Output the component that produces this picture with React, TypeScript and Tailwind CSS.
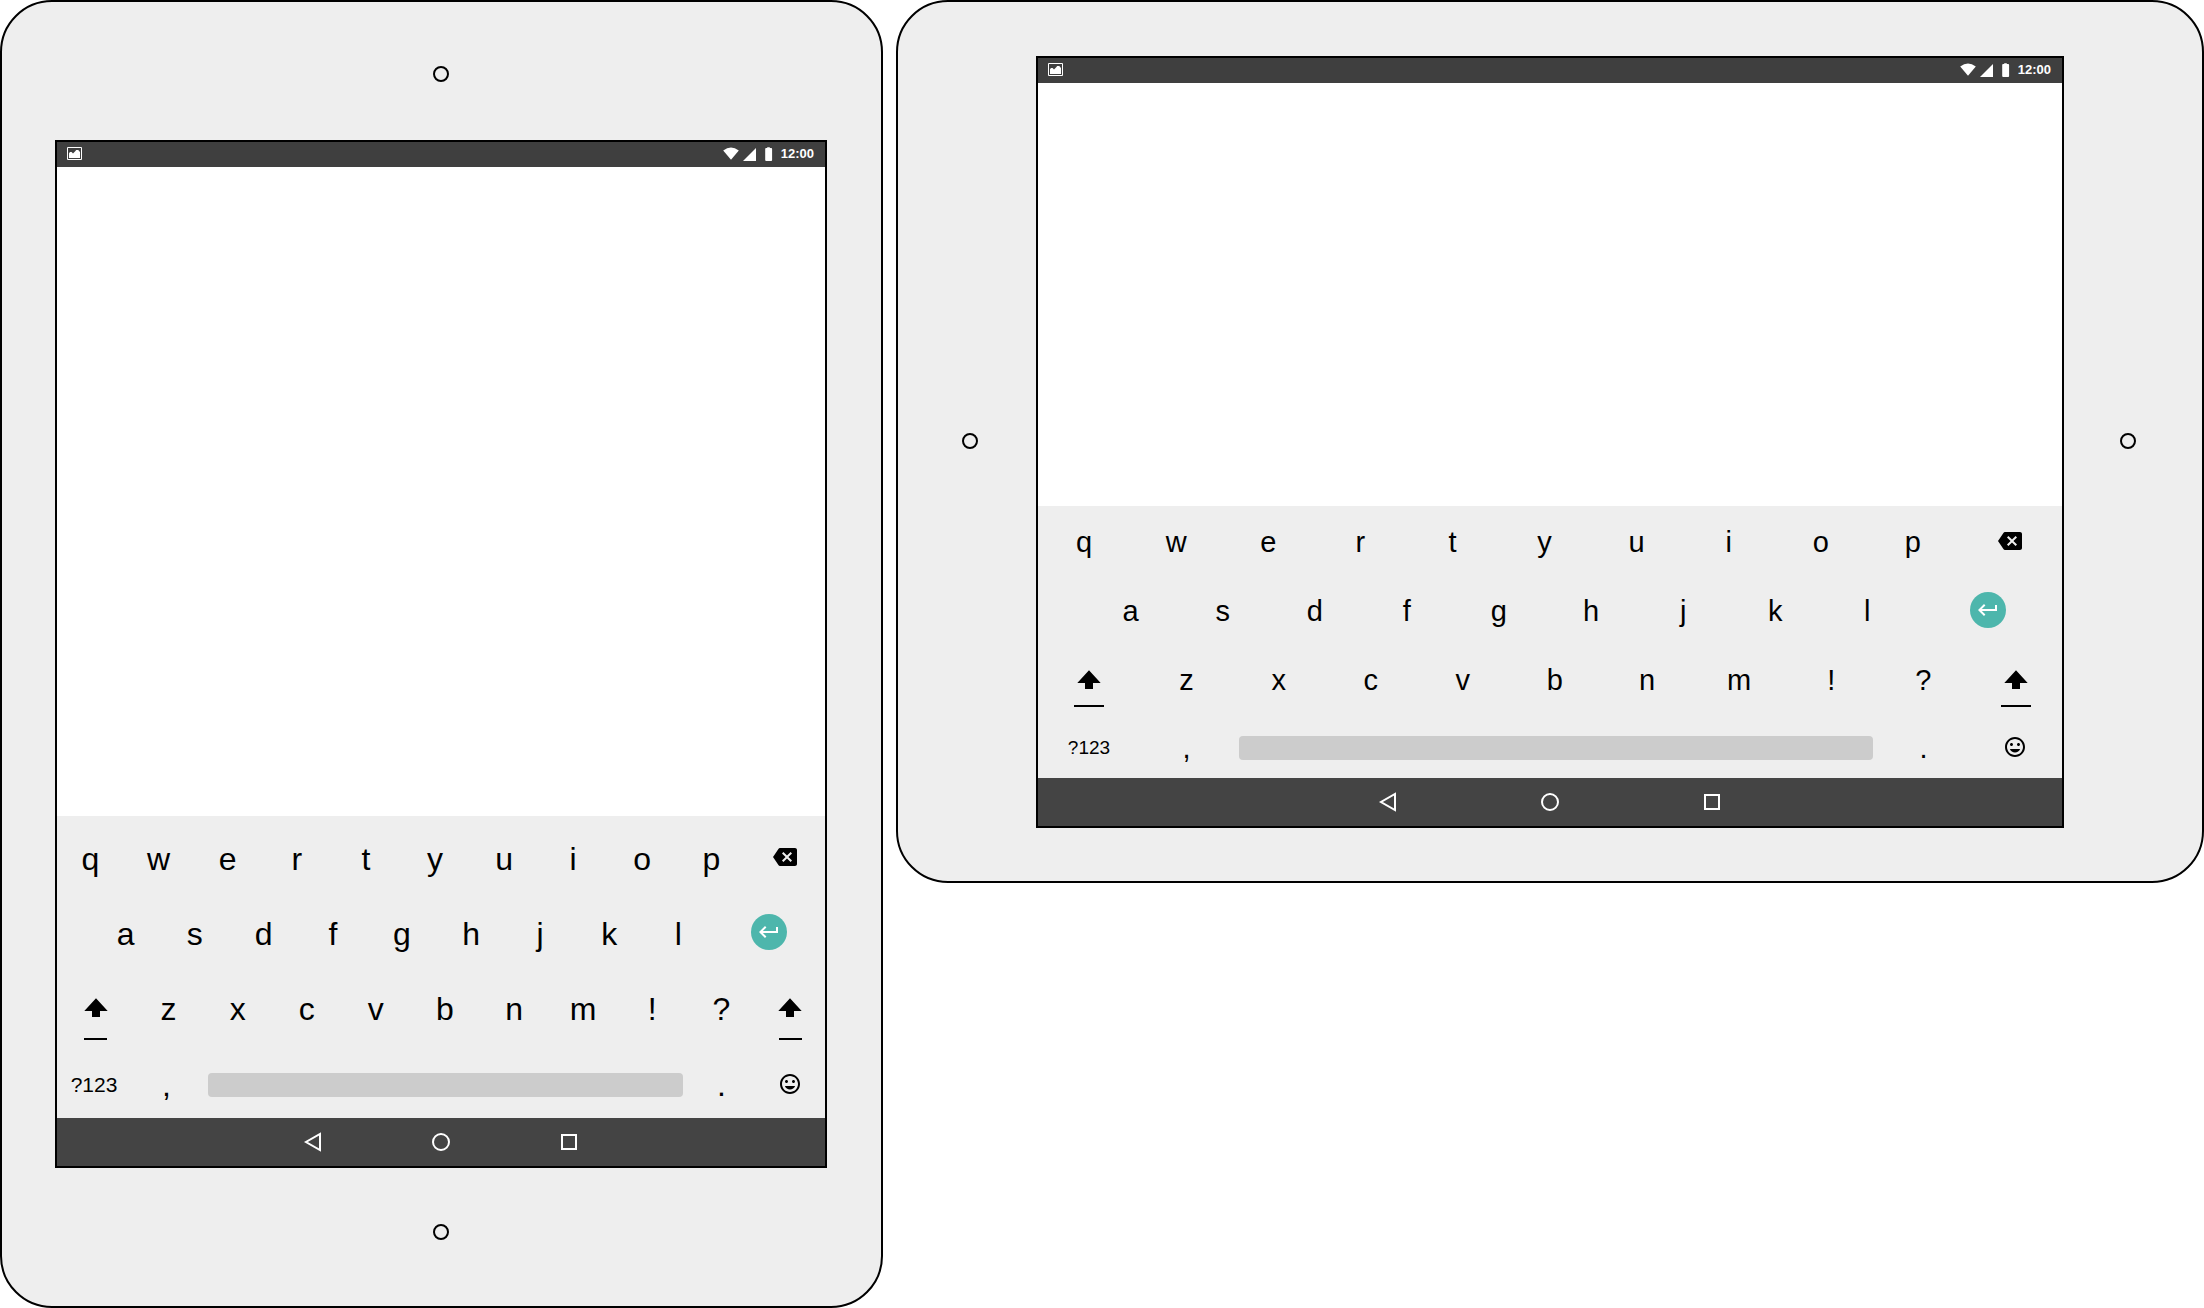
import type { ReactNode } from "react";
import { MdBackspace, MdInsertEmoticon, MdKeyboardReturn } from "react-icons/md";

type Orientation = "portrait" | "landscape";

const sizes = {
  portrait: {
    letter: "text-[32px]",
    small: "text-[21px]",
    keyboard: "pt-[5px]",
    row: "h-[75px]",
    rowBottom: "h-[72px] pt-1.5",
    top: "grid-cols-[670fr_repeat(9,691fr)_791fr]",
    home: "grid-cols-[340fr_repeat(9,691fr)_1121fr]",
    shift: "grid-cols-[770fr_repeat(9,691fr)_691fr]",
    bottom: "grid-cols-[74fr_71fr_487fr_65fr_71fr]",
    underline: "w-[23px] bottom-1.5",
    blank: "h-[649px]",
    nav: "gap-[104px]",
  },
  landscape: {
    letter: "text-[29px]",
    small: "text-[19px]",
    keyboard: "pt-0.5",
    row: "h-[69px]",
    rowBottom: "h-[63px] pt-[3px]",
    top: "grid-cols-[921fr_repeat(9,921fr)_1030fr]",
    home: "grid-cols-[465fr_repeat(9,921fr)_1486fr]",
    shift: "grid-cols-[1025fr_repeat(9,921fr)_926fr]",
    bottom: "grid-cols-[102fr_93fr_646fr_89fr_94fr]",
    underline: "w-[30px] bottom-2",
    blank: "h-[423px]",
    nav: "gap-[138px]",
  },
};

function Key({ label, className = "", children }: { label: string; className?: string; children?: ReactNode }) {
  return (
    <button type="button" aria-label={label} className={`relative flex min-w-0 items-center justify-center leading-none ${className}`}>
      {children ?? label}
    </button>
  );
}

function ShiftKey({ underline }: { underline: string }) {
  return (
    <Key label="Shift" className="pb-0.5">
      <svg width="24" height="20" viewBox="0 0 24 20" aria-hidden="true">
        <path d="M12 0.3 0.3 13H8v6h8v-6h7.7z" fill="#000" />
      </svg>
      <span className={`absolute h-0.5 bg-black ${underline}`} />
    </Key>
  );
}

function Letters({ keys }: { keys: string }) {
  return (
    <>
      {keys.split("").map((key) => (
        <Key key={key} label={key} />
      ))}
    </>
  );
}

function Keyboard({ orientation }: { orientation: Orientation }) {
  const s = sizes[orientation];
  return (
    <div className={`bg-[#eeeeee] text-black ${s.keyboard} ${s.letter}`}>
      <div className={`grid ${s.row} ${s.top}`}>
        <Letters keys="qwertyuiop" />
        <Key label="Backspace" className="pb-1">
          <MdBackspace size={24} />
        </Key>
      </div>
      <div className={`grid ${s.row} ${s.home}`}>
        <span />
        <Letters keys="asdfghjkl" />
        <Key label="Enter" className="pb-1">
          <span className="flex size-9 items-center justify-center rounded-full bg-[#4db6ac] text-white">
            <MdKeyboardReturn size={24} />
          </span>
        </Key>
      </div>
      <div className={`grid ${s.row} ${s.shift}`}>
        <ShiftKey underline={s.underline} />
        <Letters keys="zxcvbnm!?" />
        <ShiftKey underline={s.underline} />
      </div>
      <div className={`grid ${s.rowBottom} ${s.bottom}`}>
        <Key label="?123" className={`pb-0.5 ${s.small}`} />
        <Key label="," />
        <Key label="Space" className="px-1.5">
          <span className="h-6 w-full rounded-sm bg-[#cccccc]" />
        </Key>
        <Key label="." />
        <Key label="Emoji" className="pb-0.5">
          <MdInsertEmoticon size={24} />
        </Key>
      </div>
    </div>
  );
}

function StatusBar() {
  return (
    <header className="flex h-[25px] items-center justify-between bg-[#3f3f3f] pr-[11px] pb-0.5 pl-2.5 text-white">
      <svg width="15" height="13" viewBox="0 0 15 13" aria-hidden="true">
        <path d="M.5.5h14v12H.5z" fill="none" stroke="#fff" />
        <path d="M2 11V6.2L3 5h1.6L6 6.4 8.2 4.2 9.2 3h2L13 5v6z" fill="#fff" />
      </svg>
      <div className="flex items-center">
        <svg width="50" height="15" viewBox="0 -1 50 15" fill="#fff" aria-hidden="true">
          <path d="M.2 3.5Q8-2.5 15.8 3.5L8 12.8z" />
          <path d="M33 1v13H20z" />
          <path d="M44.2 1V.2h2.6V1h1.4q.9 0 .9.9v11.2q0 .9-.9.9h-5.1q-.9 0-.9-.9V1.9q0-.9.9-.9z" />
        </svg>
        <span className="ml-2 text-[13px] leading-none font-bold">12:00</span>
      </div>
    </header>
  );
}

function NavBar({ gap }: { gap: string }) {
  return (
    <nav className={`flex h-12 items-center justify-center bg-[#444444] ${gap}`}>
      <button type="button" aria-label="Back">
        <svg width="24" height="24" viewBox="0 0 24 24" fill="none" stroke="#fff" strokeWidth="2">
          <path d="M19 4v16L5 12z" />
        </svg>
      </button>
      <button type="button" aria-label="Home">
        <svg width="24" height="24" viewBox="0 0 24 24" fill="none" stroke="#fff" strokeWidth="2">
          <circle cx="12" cy="12" r="8" />
        </svg>
      </button>
      <button type="button" aria-label="Overview">
        <svg width="24" height="24" viewBox="0 0 24 24" fill="none" stroke="#fff" strokeWidth="2">
          <path d="M5 5h14v14H5z" />
        </svg>
      </button>
    </nav>
  );
}

function Screen({ orientation }: { orientation: Orientation }) {
  const s = sizes[orientation];
  return (
    <section className="min-w-0 flex-1 border-2 border-black bg-white">
      <StatusBar />
      <div className={s.blank} />
      <Keyboard orientation={orientation} />
      <NavBar gap={s.nav} />
    </section>
  );
}

function Dot() {
  return <span className="size-4 shrink-0 rounded-full border-2 border-black" />;
}

export default function App() {
  return (
    <main className="grid grid-cols-[883fr_1308fr] items-start gap-[13px] bg-white font-['Liberation_Sans',Arial,sans-serif]">
      <article className="flex min-w-0 flex-col rounded-[52px] border-2 border-black bg-[#eeeeee] pr-[54px] pl-[53px]">
        <div className="flex h-[138px] items-center justify-center pt-1.5">
          <Dot />
        </div>
        <Screen orientation="portrait" />
        <div className="flex h-[138px] items-center justify-center pb-2.5">
          <Dot />
        </div>
      </article>
      <article className="flex min-w-0 rounded-[52px] border-2 border-black bg-[#eeeeee] pt-[54px] pb-[53px]">
        <div className="flex w-[138px] shrink-0 items-center justify-center pb-0.5 pl-1.5">
          <Dot />
        </div>
        <Screen orientation="landscape" />
        <div className="flex w-[138px] shrink-0 items-center justify-center pr-2.5 pb-0.5">
          <Dot />
        </div>
      </article>
    </main>
  );
}
